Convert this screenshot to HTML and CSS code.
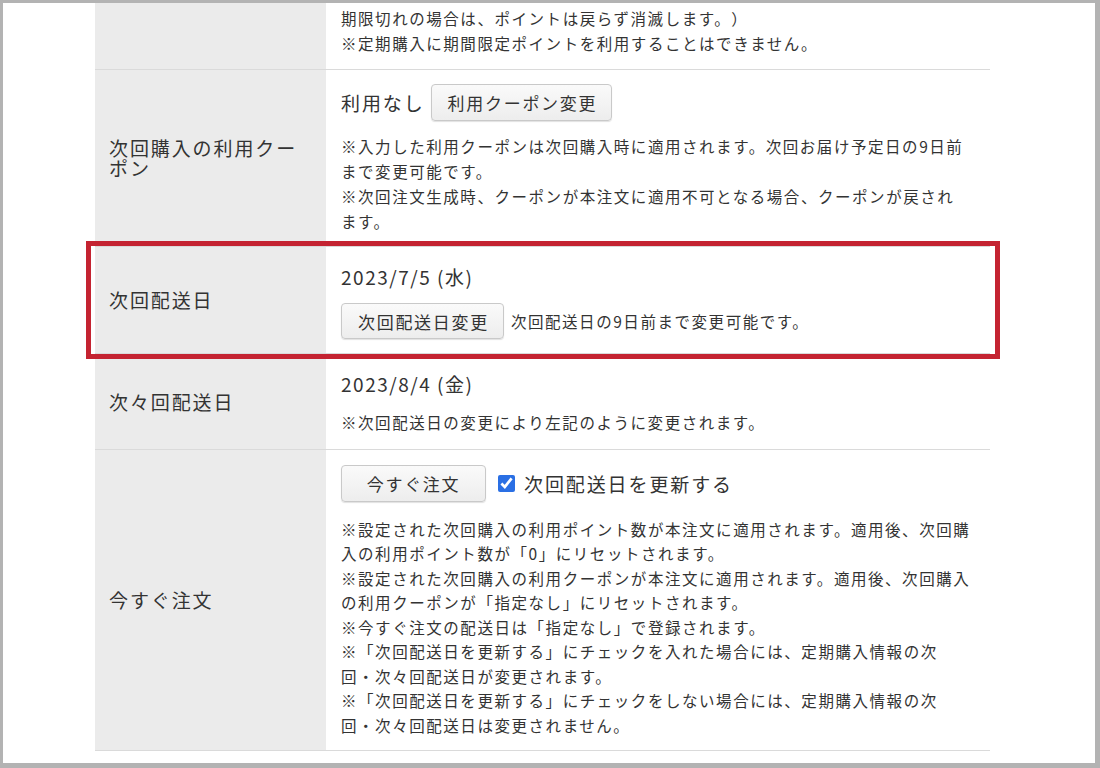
FILE: index.html
```html
<!DOCTYPE html>
<html lang="ja">
<head>
<meta charset="utf-8">
<title>定期購入情報</title>
<link rel="stylesheet" href="styles.css">
</head>
<body>
<div class="frame">
  <div class="spec">
    <div class="row row--first">
      <div class="label"></div>
      <div class="value value--first">
        <p class="note">期限切れの場合は、ポイントは戻らず消滅します。）<br>※定期購入に期間限定ポイントを利用することはできません。</p>
      </div>
    </div>

    <div class="row">
      <div class="label">次回購入の利用クーポン</div>
      <div class="value value--coupon">
        <div class="action">
          <span class="strong-text">利用なし</span>
          <button class="btn" type="button">利用クーポン変更</button>
        </div>
        <p class="note note--after-action">※入力した利用クーポンは次回購入時に適用されます。次回お届け予定日の9日前<br>まで変更可能です。<br>※次回注文生成時、クーポンが本注文に適用不可となる場合、クーポンが戻され<br>ます。</p>
      </div>
    </div>

    <div class="row row--highlight">
      <div class="label">次回配送日</div>
      <div class="value">
        <div class="date">2023/7/5 (水)</div>
        <div class="action action--date">
          <button class="btn btn--short" type="button">次回配送日変更</button>
          <span class="inline-note">次回配送日の9日前まで変更可能です。</span>
        </div>
      </div>
    </div>

    <div class="row">
      <div class="label">次々回配送日</div>
      <div class="value">
        <div class="date">2023/8/4 (金)</div>
        <p class="note note--after-date">※次回配送日の変更により左記のように変更されます。</p>
      </div>
    </div>

    <div class="row">
      <div class="label">今すぐ注文</div>
      <div class="value value--order">
        <div class="action">
          <button class="btn btn--wide" type="button">今すぐ注文</button>
          <label class="check">
            <input type="checkbox" checked>
            <span class="strong-text">次回配送日を更新する</span>
          </label>
        </div>
        <p class="note note--dense">※設定された次回購入の利用ポイント数が本注文に適用されます。適用後、次回購<br>入の利用ポイント数が「0」にリセットされます。<br>※設定された次回購入の利用クーポンが本注文に適用されます。適用後、次回購入<br>の利用クーポンが「指定なし」にリセットされます。<br>※今すぐ注文の配送日は「指定なし」で登録されます。<br>※「次回配送日を更新する」にチェックを入れた場合には、定期購入情報の次<br>回・次々回配送日が変更されます。<br>※「次回配送日を更新する」にチェックをしない場合には、定期購入情報の次<br>回・次々回配送日は変更されません。</p>
      </div>
    </div>
  </div>
</div>
</body>
</html>
```

FILE: styles.css
```css
html, body {
  margin: 0;
  padding: 0;
  background: #ffffff;
}

.frame {
  width: 1100px;
  height: 768px;
  box-sizing: border-box;
  border-style: solid;
  border-color: #b3b3b3;
  border-width: 3px 5px 5px 3px;
  background: #ffffff;
  overflow: hidden;
  font-family: "Noto Sans CJK JP", "Noto Sans", sans-serif;
  color: #333333;
  text-spacing-trim: space-all;
}

.spec {
  margin-left: 92px;
  width: 895px;
}

.row {
  display: grid;
  grid-template-columns: 231px 1fr;
  border-bottom: 1px solid #dadada;
}

.row--highlight {
  position: relative;
}

.row--highlight::after {
  content: "";
  position: absolute;
  top: -6px;
  bottom: -6px;
  left: -9px;
  right: -10px;
  border: 5px solid #c42331;
  pointer-events: none;
}

.label {
  background: #ebebeb;
  padding: 0 14px;
  display: flex;
  align-items: center;
  font-size: 19px;
  line-height: 20px;
  letter-spacing: 0.1em;
}

.value {
  padding: 15px 8px 14px 15px;
}

.value--first {
  padding-top: 2.5px;
  padding-bottom: 13px;
}

.value--coupon {
  padding-top: 14.5px;
  padding-bottom: 12px;
}

.value--order {
  padding-bottom: 13px;
}

.note {
  margin: 0;
  font-size: 15.5px;
  line-height: 25px;
  letter-spacing: 0.1em;
}

.note--after-action {
  margin-top: 13px;
}

.note--after-date {
  margin-top: 11px;
}

.note--dense {
  margin-top: 14.5px;
  line-height: 24.5px;
}

.date {
  font-size: 19px;
  line-height: 30px;
  letter-spacing: 0.08em;
}

.action {
  display: flex;
  align-items: center;
}

.action--date {
  margin-top: 11px;
}

.strong-text {
  font-size: 19px;
  letter-spacing: 0.1em;
  line-height: 24px;
}

.btn {
  height: 37px;
  margin: 0 0 0 6px;
  padding: 0 14px 0 16px;
  font-family: inherit;
  font-size: 17px;
  letter-spacing: 0.1em;
  color: #333333;
  background: linear-gradient(#fafafa, #ededed);
  border: 1px solid #c9c9c9;
  border-radius: 4px;
  box-shadow: 0 1px 1px rgba(0, 0, 0, 0.12);
  cursor: pointer;
  text-spacing-trim: space-all;
}

.btn--short {
  height: 36px;
  margin-left: 0;
}

.btn--wide {
  width: 145px;
  margin-left: 0;
  padding: 0;
}

.inline-note {
  margin-left: 7px;
  font-size: 15.5px;
  letter-spacing: 0.1em;
}

.check {
  display: flex;
  align-items: center;
  margin-left: 12px;
}

.check input {
  width: 17px;
  height: 17px;
  margin: 0 9px 0 0;
  accent-color: #2a6fe4;
}
```
